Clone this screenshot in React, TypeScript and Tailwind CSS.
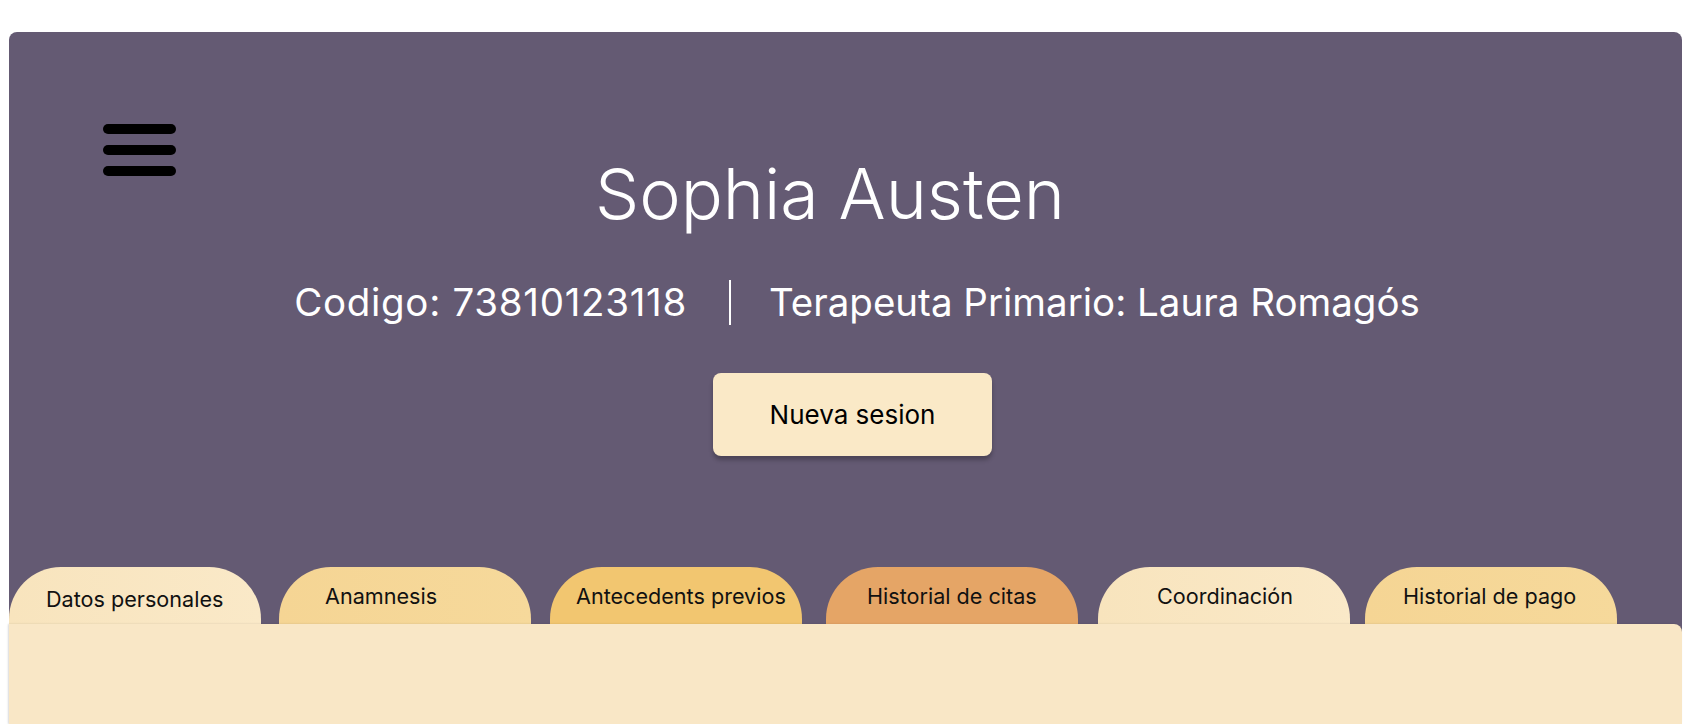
const tabs = [
  { label: 'Datos personales', bg: 'bg-gradient-to-r from-[#f8e4bd] to-[#fae9c8]', ml: 'ml-0', pl: 'pl-[37px]', pt: 'pt-[22px]' },
  { label: 'Anamnesis', bg: 'bg-gradient-to-r from-[#f5d594] to-[#f6d99b]', ml: 'ml-[18px]', pl: 'pl-[46px]', pt: 'pt-[19px]' },
  { label: 'Antecedents previos', bg: 'bg-[#f2c670]', ml: 'ml-[19px]', pl: 'pl-[26px]', pt: 'pt-[19px]' },
  { label: 'Historial de citas', bg: 'bg-[#e5a566]', ml: 'ml-[24px]', pl: 'pl-[41px]', pt: 'pt-[19px]' },
  { label: 'Coordinación', bg: 'bg-gradient-to-r from-[#f8e4bd] to-[#fae9c8]', ml: 'ml-[20px]', pl: 'pl-[59px]', pt: 'pt-[19px]' },
  { label: 'Historial de pago', bg: 'bg-gradient-to-r from-[#f5d594] to-[#f6d99b]', ml: 'ml-[15px]', pl: 'pl-[38px]', pt: 'pt-[19px]' },
]

export default function App() {
  return (
    <div className="h-[724px] overflow-hidden bg-white pt-[32px] pl-[9px] pr-[4px] font-['Inter',sans-serif]">
      <div className="h-full flex flex-col rounded-t-[8px] bg-[#645a73]">
        {/* header */}
        <div className="grid grid-cols-[200px_1fr_200px] items-start">
          <button className="pt-[92px] pl-[94px] flex flex-col gap-[11px]">
            <span className="block w-[73px] h-[10px] rounded-full bg-black" />
            <span className="block w-[73px] h-[10px] rounded-full bg-black" />
            <span className="block w-[73px] h-[10px] rounded-full bg-black" />
          </button>
          <h1 className="pt-[127px] pr-[31px] text-center text-white text-[70px] leading-none font-light">
            Sophia Austen
          </h1>
          <div />
        </div>

        <div className="mt-[51px] pl-[23px] flex items-center justify-center text-white text-[38.5px] leading-none font-normal">
          <span className="tracking-[0.7px]">Codigo: 73810123118</span>
          <span className="ml-[42px] mr-[38px] w-[2px] h-[45px] bg-white" />
          <span>Terapeuta Primario: Laura Romagós</span>
        </div>

        <div className="mt-[48px] flex justify-center">
          <button className="ml-[14px] w-[279px] h-[83px] rounded-[8px] bg-[#fae9c7] text-[26px] text-black shadow-[0_4px_4px_rgba(0,0,0,0.25)]">
            Nueva sesion
          </button>
        </div>

        {/* tabs */}
        <div className="mt-[111px] flex items-end">
          {tabs.map(t => (
            <div
              key={t.label}
              className={`${t.ml} ${t.bg} ${t.pl} ${t.pt} w-[252px] h-[57px] shrink-0 rounded-t-[52px] text-[21.6px] leading-none text-[#111]`}
            >
              {t.label}
            </div>
          ))}
        </div>

        <div className="flex-1 rounded-tr-[8px] bg-[#f9e7c6] shadow-[-1px_0_2px_rgba(0,0,0,0.15)]" />
      </div>
    </div>
  )
}
